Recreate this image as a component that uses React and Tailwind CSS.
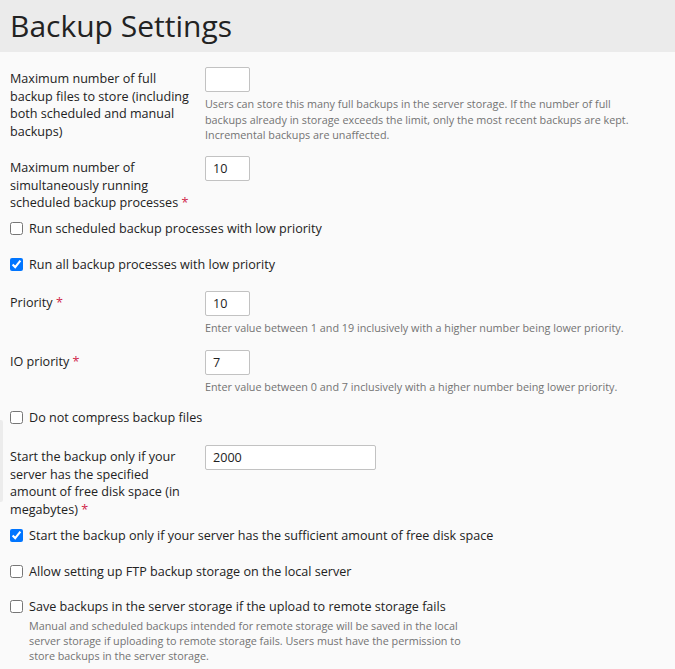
const font = { fontFamily: '"Open Sans", "Noto Sans", sans-serif' };

function Star() {
  return <span className="text-[#d0274b]"> *</span>;
}

function TextInput({ value, wide }) {
  return (
    <input
      type="text"
      defaultValue={value}
      className={`${wide ? "w-[171px]" : "w-[45px]"} h-[25px] rounded-[2px] border border-[#c2c2c2] bg-white px-[7px] text-[12.6px] text-[#222] outline-none`}
    />
  );
}

function Help({ children, className = "" }) {
  return <p className={`text-[10.8px] leading-[15.5px] text-[#737373] ${className}`}>{children}</p>;
}

function Field({ label, required, value, wide, help, className = "" }) {
  return (
    <div className={`flex items-start ${className}`}>
      <label className="w-[195px] shrink-0 pr-[10px] pt-[3px] leading-[17.5px]">
        {label}
        {required && <Star />}
      </label>
      <div className="flex flex-col">
        <TextInput value={value} wide={wide} />
        {help && <Help className="mt-[4px] max-w-[430px]">{help}</Help>}
      </div>
    </div>
  );
}

function Check({ label, checked, help, className = "" }) {
  return (
    <div className={className}>
      <label className="flex items-center gap-[6px] leading-[17.5px]">
        <input type="checkbox" defaultChecked={checked} className="m-0 h-[13px] w-[13px] accent-[#0075ff]" />
        <span>{label}</span>
      </label>
      {help && (
        <p className="mt-[3px] max-w-[462px] pl-[19px] text-[10.8px] leading-[15px] text-[#737373]">{help}</p>
      )}
    </div>
  );
}

export default function App() {
  return (
    <div className="relative min-h-[669px] bg-[#fafafa] text-[12.6px] text-[#222]" style={font}>
      <div className="flex h-[52px] items-center bg-[#ebebeb] px-[10px]">
        <h1 className="text-[30px] font-medium leading-none text-[#222]">Backup Settings</h1>
      </div>
      <div className="absolute left-0 top-[420px] h-[82px] w-[3px] rounded-r-[2px] bg-[#ececec]" />

      <div className="flex flex-col px-[10px] pb-[8px] pt-[15px]">
        <Field
          label="Maximum number of full backup files to store (including both scheduled and manual backups)"
          value=""
          help="Users can store this many full backups in the server storage. If the number of full backups already in storage exceeds the limit, only the most recent backups are kept. Incremental backups are unaffected."
        />
        <Field
          className="mt-[13.5px]"
          label="Maximum number of simultaneously running scheduled backup processes"
          required
          value="10"
        />
        <Check className="mt-[8px]" label="Run scheduled backup processes with low priority" />
        <Check className="mt-[18.5px]" label="Run all backup processes with low priority" checked />
        <Field
          className="mt-[18px]"
          label="Priority"
          required
          value="10"
          help="Enter value between 1 and 19 inclusively with a higher number being lower priority."
        />
        <Field
          className="mt-[14.25px]"
          label="IO priority"
          required
          value="7"
          help="Enter value between 0 and 7 inclusively with a higher number being lower priority."
        />
        <Check className="mt-[14.75px]" label="Do not compress backup files" />
        <Field
          className="mt-[18.5px]"
          label="Start the backup only if your server has the specified amount of free disk space (in megabytes)"
          required
          value="2000"
          wide
        />
        <Check
          className="mt-[8.5px]"
          label="Start the backup only if your server has the sufficient amount of free disk space"
          checked
        />
        <Check className="mt-[18.5px]" label="Allow setting up FTP backup storage on the local server" />
        <Check
          className="mt-[17.5px]"
          label="Save backups in the server storage if the upload to remote storage fails"
          help="Manual and scheduled backups intended for remote storage will be saved in the local server storage if uploading to remote storage fails. Users must have the permission to store backups in the server storage."
        />
      </div>
    </div>
  );
}
